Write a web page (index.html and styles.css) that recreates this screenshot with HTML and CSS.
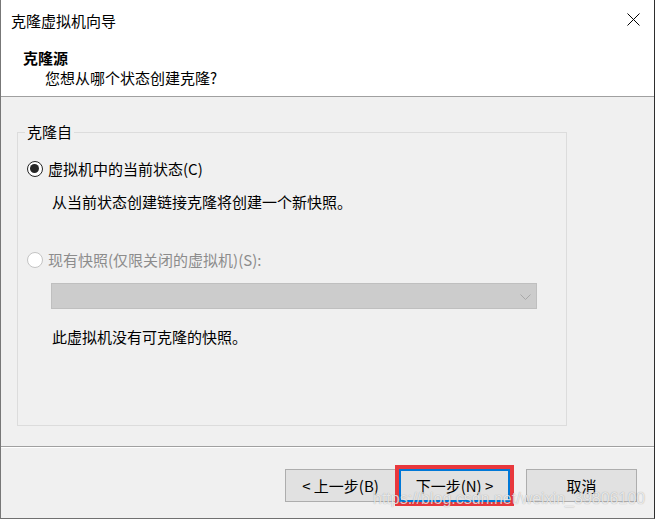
FILE: index.html
```html
<!DOCTYPE html>
<html lang="zh-CN">
<head>
<meta charset="utf-8">
<title>克隆虚拟机向导</title>
<link rel="stylesheet" href="styles.css">
</head>
<body>
<div class="window">
  <div class="top">
    <div class="titlebar">
      <span class="title">克隆虚拟机向导</span>
      <svg class="close" width="13" height="13" viewBox="0 0 13 13"><path d="M0.5 0.5 L12.5 12.5 M12.5 0.5 L0.5 12.5" stroke="#000" stroke-width="1" fill="none"/></svg>
    </div>
    <div class="header">
      <div class="h-title">克隆源</div>
      <div class="h-sub">您想从哪个状态创建克隆?</div>
    </div>
  </div>
  <div class="body">
    <fieldset class="group">
      <legend>克隆自</legend>
      <div class="option opt1"><span class="radio checked"></span><span>虚拟机中的当前状态(C)</span></div>
      <div class="desc d1">从当前状态创建链接克隆将创建一个新快照。</div>
      <div class="option opt2 disabled"><span class="radio"></span><span>现有快照(仅限关闭的虚拟机)(S):</span></div>
      <div class="combo"><svg class="chev" width="11" height="7" viewBox="0 0 11 7"><polyline points="0.5,0.5 5.5,5.5 10.5,0.5" stroke="#a8a8a8" stroke-width="1" fill="none"/></svg></div>
      <div class="desc d2">此虚拟机没有可克隆的快照。</div>
    </fieldset>
  </div>
  <div class="footer">
    <button class="btn back">&lt; 上一步(B)</button>
    <button class="btn next">下一步(N) &gt;</button>
    <button class="btn cancel">取消</button>
  </div>
  <span class="watermark">https://blog.csdn.net/weixin_39806100</span>
</div>
</body>
</html>
```

FILE: styles.css
```css
* { box-sizing: border-box; }
html, body { margin: 0; padding: 0; }
body {
  width: 655px;
  height: 519px;
  overflow: hidden;
  background: #f0f0f0;
  font-family: "Noto Sans CJK SC", "Microsoft YaHei", sans-serif;
  font-size: 15px;
  color: #000;
}
.window {
  position: relative;
  width: 655px;
  height: 519px;
  border-left: 1px solid #777777;
  border-right: 1px solid #2e2e2e;
  border-bottom: 1px solid #707070;
  background: #f0f0f0;
  display: flex;
  flex-direction: column;
}
.top {
  background: #ffffff;
  border-bottom: 1px solid #a0a0a0;
}
.titlebar {
  height: 40px;
  display: flex;
  justify-content: space-between;
  align-items: flex-start;
}
.title {
  margin: 11px 0 0 10px;
  line-height: 20px;
}
.close {
  margin: 13px 14px 0 0;
  display: block;
}
.header {
  padding: 8px 0 8px 22px;
  line-height: 20px;
}
.h-title { font-weight: bold; }
.h-sub { padding-left: 22px; }

.body {
  height: 349px;
  padding: 25px 0 0 16px;
}
.group {
  margin: 0;
  padding: 0;
  width: 550px;
  height: 304px;
  border: 1px solid #dcdcdc;
  min-width: 0;
}
.group legend {
  margin-left: 7px;
  padding: 0 2px;
  line-height: 20px;
}
.option {
  display: flex;
  align-items: center;
  height: 20px;
  line-height: 20px;
}
.radio {
  width: 16px;
  height: 16px;
  border-radius: 50%;
  border: 1px solid #c4c4c4;
  background: #ffffff;
  margin-right: 5px;
  position: relative;
  flex: none;
}
.radio.checked {
  border: 1.5px solid #262626;
  background: #ffffff;
}
.radio.checked::after {
  content: "";
  position: absolute;
  left: 1.75px;
  top: 1.75px;
  width: 9.5px;
  height: 9.5px;
  border-radius: 50%;
  background: #262626;
}
.opt1 { margin: 17px 0 0 9px; }
.d1 { margin: 13px 0 0 34px; line-height: 20px; }
.opt2 { margin: 38px 0 0 9px; }
.disabled { color: #8c8c8c; }
.combo {
  margin: 13px 0 0 33px;
  width: 486px;
  height: 26px;
  background: #cccccc;
  border: 1px solid #bfbfbf;
  display: flex;
  justify-content: flex-end;
  align-items: center;
  padding-right: 5px;
}
.chev { display: block; margin-top: 2px; }
.d2 { margin: 18px 0 0 34px; line-height: 20px; }

.footer {
  flex: 1;
  border-top: 1px solid #a0a0a0;
  box-shadow: inset 0 1px 0 #ffffff;
  display: flex;
  justify-content: flex-end;
  align-items: flex-start;
  padding: 22px 17px 0 0;
}
.btn {
  width: 111px;
  height: 33px;
  border: 1px solid #adadad;
  background: #e1e1e1;
  font-family: inherit;
  font-size: 15px;
  color: #000;
  padding: 0;
  line-height: 20px;
  margin: 0;
}
.back { margin-right: 3px; }
.next {
  margin-right: 16px;
  border: 2px solid #0078d7;
  outline: 4px solid #e8383d;
  outline-offset: 0;
}
.watermark {
  position: absolute;
  left: 372px;
  top: 490px;
  font-family: "Liberation Sans", Arial, sans-serif;
  font-size: 16px;
  line-height: 18px;
  color: rgba(255, 255, 255, 0.75);
  text-shadow: 0 0 1px rgba(0, 0, 0, 0.35);
  white-space: nowrap;
}
```
